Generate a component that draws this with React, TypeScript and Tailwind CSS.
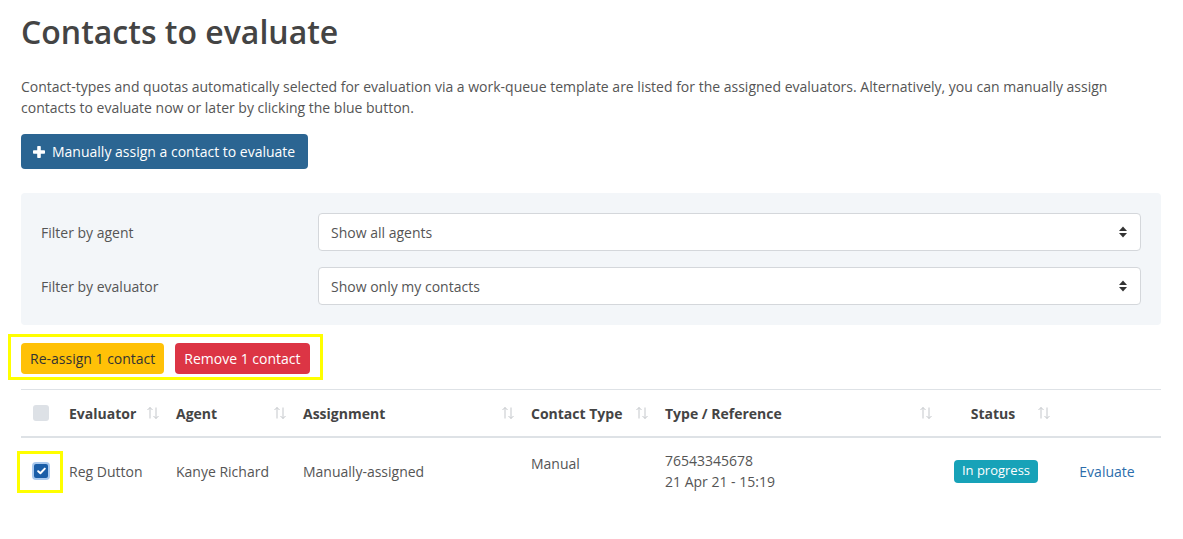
import { useState } from "react";

const SortIcon = () => (
  <svg width="14" height="14" viewBox="0 0 14 14" fill="none" stroke="#c4c7cb" strokeWidth="1">
    <path d="M4 12.5V1.5M1.5 4L4 1.5L6.5 4" />
    <path d="M10 1.5V12.5M7.5 10L10 12.5L12.5 10" />
  </svg>
);

const SelectCaret = () => (
  <svg width="10" height="14" viewBox="0 0 10 14" fill="#333">
    <path d="M5 1.5L9 6H1Z" />
    <path d="M5 12.5L9 8H1Z" />
  </svg>
);

interface HeadCellProps {
  label: string;
  width: string;
  center?: boolean;
}

const HeadCell = ({ label, width, center }: HeadCellProps) => (
  <div className={`${width} flex items-center px-2 h-full`}>
    <span className={`flex-1 ${center ? "text-center" : ""}`}>{label}</span>
    <SortIcon />
  </div>
);

const App = () => {
  const [checked, setChecked] = useState(true);

  return (
    <div className="min-h-screen bg-white pl-[21px] pr-[22px] pt-[13px] text-[#555] text-[14px]" style={{ fontFamily: '"Open Sans", "Liberation Sans", sans-serif' }}>
      <h1 className="text-[32px] leading-[38px] font-semibold text-[#444]">Contacts to evaluate</h1>

      <p className="mt-[25px] leading-[21px] text-[#555]">
        Contact-types and quotas automatically selected for evaluation via a work-queue template are listed for the assigned evaluators. Alternatively, you can manually assign contacts to evaluate now or later by clicking the blue button.
      </p>

      <button className="mt-[16px] h-[35px] flex items-center gap-[7px] pl-[12px] pr-[13px] rounded-[4px] bg-[#2b6592] text-white text-[14px]">
        <svg width="12" height="12" viewBox="0 0 12 12" fill="#fff">
          <rect x="4.2" y="0" width="3.6" height="12" rx="0.8" />
          <rect x="0" y="4.2" width="12" height="3.6" rx="0.8" />
        </svg>
        Manually assign a contact to evaluate
      </button>

      {/* Filters */}
      <div className="mt-[24px] bg-[#f3f6f9] rounded-[4px] px-[20px] py-[20px] flex flex-col gap-[16px]">
        <div className="flex items-center">
          <label className="w-[277px] text-[#555]">Filter by agent</label>
          <div className="flex-1 h-[38px] bg-white border border-[#d4d7db] rounded-[4px] flex items-center pl-[12px] pr-[12px]">
            <span className="flex-1 text-[#555]">Show all agents</span>
            <SelectCaret />
          </div>
        </div>
        <div className="flex items-center">
          <label className="w-[277px] text-[#555]">Filter by evaluator</label>
          <div className="flex-1 h-[38px] bg-white border border-[#d4d7db] rounded-[4px] flex items-center pl-[12px] pr-[12px]">
            <span className="flex-1 text-[#555]">Show only my contacts</span>
            <SelectCaret />
          </div>
        </div>
      </div>

      {/* Bulk actions */}
      <div className="mt-[18px] relative flex gap-[11px] w-fit">
        <div className="absolute left-[-13px] right-[-13px] top-[-9px] bottom-[-6px] border-[3px] border-[#ffff00] pointer-events-none" />
        <button className="h-[31px] px-[9px] rounded-[4px] bg-[#ffc107] text-[#333] text-[14px]">Re-assign 1 contact</button>
        <button className="h-[31px] px-[9px] rounded-[4px] bg-[#dc3545] text-white text-[14px]">Remove 1 contact</button>
      </div>

      {/* Table */}
      <div className="mt-[15px] border-t border-[#dee2e6]">
        <div className="flex items-center h-[48px] border-b-2 border-[#dee2e6] font-bold text-[#444]">
          <div className="w-[40px] flex justify-center">
            <div className="w-[16px] h-[16px] rounded-[3px] bg-[#dde1e6]" />
          </div>
          <HeadCell label="Evaluator" width="w-[107px]" />
          <HeadCell label="Agent" width="w-[127px]" />
          <HeadCell label="Assignment" width="w-[228px]" />
          <HeadCell label="Contact Type" width="w-[134px]" />
          <HeadCell label="Type / Reference" width="w-[284px]" />
          <HeadCell label="Status" width="w-[118px]" center />
          <div className="flex-1" />
        </div>

        <div className="flex items-center h-[66px] text-[#555]">
          <div className="w-[40px] flex justify-center">
            <div className="relative">
              <div className="absolute left-[-15px] right-[-13px] top-[-11px] bottom-[-13px] border-[3px] border-[#ffff00]" />
              <button
                onClick={() => setChecked(c => !c)}
                className={`w-[18px] h-[18px] rounded-[4px] flex items-center justify-center border-2 ${checked ? "bg-[#1a5ea8] border-[#a9c9ee]" : "bg-white border-[#ccc]"}`}
              >
                {checked && (
                  <svg width="9" height="8" viewBox="0 0 9 8" fill="none" stroke="#fff" strokeWidth="2" strokeLinecap="round" strokeLinejoin="round">
                    <path d="M1.2 4.2L3.4 6.2L7.8 1.6" />
                  </svg>
                )}
              </button>
            </div>
          </div>
          <div className="w-[107px] px-2 leading-[21px]">Reg Dutton</div>
          <div className="w-[127px] px-2 leading-[21px]">Kanye Richard</div>
          <div className="w-[228px] px-2 leading-[21px]">Manually-assigned</div>
          <div className="w-[134px] px-2 leading-[21px] self-start pt-[15px]">Manual</div>
          <div className="w-[284px] px-2 leading-[21px]">
            <div>76543345678</div>
            <div>21 Apr 21 - 15:19</div>
          </div>
          <div className="w-[118px] pl-2 pr-[16px] flex justify-center">
            <span className="h-[23px] px-[8px] rounded-[4px] bg-[#17a2b8] text-white text-[13px] flex items-center">In progress</span>
          </div>
          <div className="flex-1 flex justify-center pr-[6px]">
            <a href="#" className="text-[#2c6dab]">Evaluate</a>
          </div>
        </div>
      </div>
    </div>
  );
};

export default App;
